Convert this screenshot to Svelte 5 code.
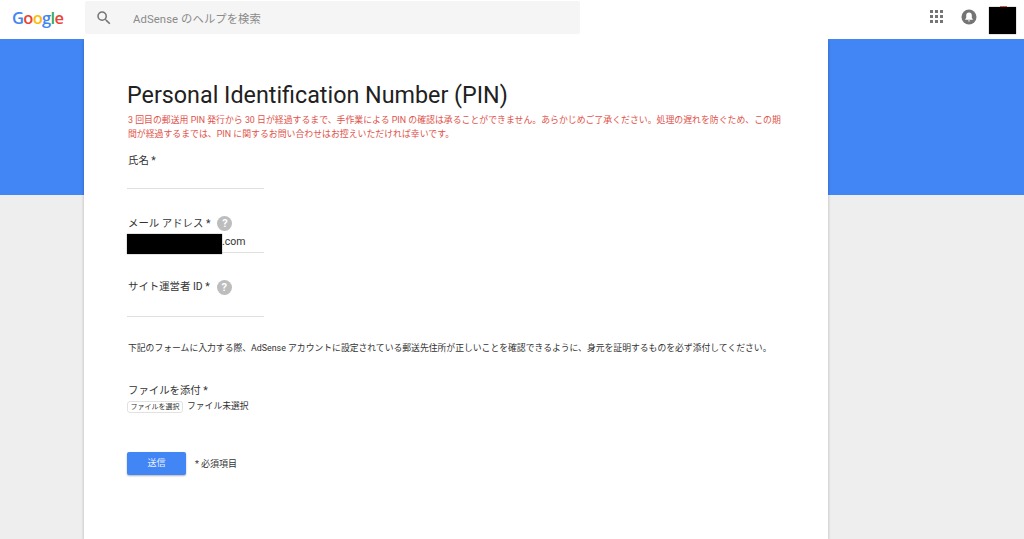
<script>
  const dots = Array.from({ length: 9 });
</script>

<div class="page">
  <header class="top">
    <div class="logo"><span class="b">G</span><span class="r">o</span><span class="y">o</span><span class="b">g</span><span class="g">l</span><span class="r">e</span></div>
    <div class="search">
      <svg class="mag" width="18" height="18" viewBox="0 0 24 24"><path fill="#757575" d="M15.5 14h-.79l-.28-.27A6.47 6.47 0 0 0 16 9.5 6.5 6.5 0 1 0 9.5 16c1.61 0 3.09-.59 4.23-1.57l.27.28v.79l5 4.99L20.49 19l-4.99-5zm-6 0C7.01 14 5 11.99 5 9.5S7.01 5 9.5 5 14 7.01 14 9.5 11.99 14 9.5 14z"/></svg>
      <span class="ph">AdSense のヘルプを検索</span>
    </div>
    <div class="right">
      <div class="grid">{#each dots as _}<i></i>{/each}</div>
      <svg class="bell" width="16" height="16" viewBox="0 0 16 16"><circle cx="8" cy="8" r="7.5" fill="#757575"/><path fill="#fff" d="M8 3.4c-1.8 0-2.8 1.3-2.8 3v2.4L4.2 10.2v.6h7.6v-.6l-1-1.4V6.4c0-1.7-1-3-2.8-3zM6.9 11.4a1.1 1.1 0 0 0 2.2 0z"/></svg>
      <div class="avatar"><span class="tip"></span></div>
    </div>
  </header>

  <div class="stage">
    <div class="band"></div>
    <main class="card">
      <h1>Personal Identification Number (PIN)</h1>
      <p class="warn">3 回目の郵送用 PIN 発行から 30 日が経過するまで、手作業による PIN の確認は承ることができません。あらかじめご了承ください。処理の遅れを防ぐため、この期間が経過するまでは、PIN に関するお問い合わせはお控えいただければ幸いです。</p>

      <div class="field f1">
        <div class="label">氏名 *</div>
        <div class="line"></div>
      </div>

      <div class="field f2">
        <div class="label">メール アドレス * <span class="help">?</span></div>
        <div class="line email"><span class="mask"></span><span class="dom">.com</span></div>
      </div>

      <div class="field f3">
        <div class="label">サイト運営者 ID * <span class="help">?</span></div>
        <div class="line"></div>
      </div>

      <p class="note">下記のフォームに入力する際、AdSense アカウントに設定されている郵送先住所が正しいことを確認できるように、身元を証明するものを必ず添付してください。</p>

      <div class="label attach">ファイルを添付 *</div>
      <div class="file"><span class="fbtn">ファイルを選択</span><span>ファイル未選択</span></div>

      <div class="actions"><span class="send">送信</span><span class="req">* 必須項目</span></div>
    </main>
  </div>
</div>

<style>
  :global(body) { margin: 0; background: #eeeeee; }
  .page { width: 1024px; height: 539px; overflow: hidden; font-family: Roboto, "Noto Sans CJK JP", sans-serif; color: #333; }
  .top { height: 39px; background: #fff; display: flex; position: relative; z-index: 2; }
  .logo { width: 85px; box-sizing: border-box; padding: 7px 0 0 12px; font-family: "Open Sans", "Liberation Sans", sans-serif; font-size: 16.5px; line-height: 22px; letter-spacing: -0.7px; font-weight: 600; }
  .b { color: #4285f4; } .r { color: #ea4335; } .y { color: #fbbc05; } .g { color: #34a853; }
  .search { width: 495px; height: 33px; margin-top: 1px; background: #f5f5f5; border-radius: 2px; display: flex; align-items: center; }
  .mag { margin-left: 10px; }
  .ph { margin-left: 20px; font-size: 11.3px; color: #8a8a8a; letter-spacing: 0.1px; }
  .right { margin-left: auto; display: flex; align-items: flex-start; }
  .grid { margin-top: 10px; display: grid; grid-template-columns: repeat(3, 3px); gap: 2px; }
  .grid i { width: 3px; height: 3px; background: #757575; }
  .bell { margin: 9px 0 0 18px; }
  .avatar { position: relative; width: 27px; height: 27px; margin: 7px 8px 0 12px; background: #000; box-shadow: 0 0 1px #666; }
  .tip { position: absolute; top: -1px; left: 11px; width: 7px; height: 1px; background: #d9534a; }
  .stage { position: relative; height: 500px; }
  .band { height: 156px; background: #4285f4; }
  .card { position: absolute; top: 0; left: 84px; width: 744px; height: 500px; box-sizing: border-box; padding: 41px 43px 0; background: #fff; box-shadow: 0 1px 3px rgba(0,0,0,.25); }
  h1 { margin: 0; font-size: 23.3px; font-weight: 400; line-height: 30px; color: #212121; }
  .warn { margin: 3px 0 0 1px; font-size: 8.9px; line-height: 14px; color: #e0524a; width: 660px; }
  .field { width: 137px; }
  .f1 { margin-top: 12px; } .f2 { margin-top: 27px; } .f3 { margin-top: 26px; }
  .label { font-size: 10.4px; line-height: 16px; color: #333; white-space: nowrap; display: flex; align-items: center; gap: 2px; height: 16px; padding-left: 1px; }
  .line { border-bottom: 1px solid #e0e0e0; height: 19px; }
  .line.email { display: flex; align-items: flex-start; font-size: 10.5px; height: 20px; line-height: 18px; }
  .f3 .line { height: 21px; }
  .mask { width: 95px; height: 20px; margin-top: 2px; background: #000; box-shadow: 0 0 1px #555; }
  .dom { margin-top: 1px; }
  .help { width: 15px; height: 15px; border-radius: 50%; background: #bdbdbd; color: #fff; font-size: 11px; font-weight: 700; line-height: 15px; text-align: center; margin-left: 5px; position: relative; top: -1px; }
  .f3 .help { top: 0; margin-left: 5px; }
  .note { margin: 24px 0 0 1px; font-size: 8.82px; line-height: 14px; color: #333; white-space: nowrap; }
  .attach { margin-top: 27px; height: 17px; }
  .file { display: flex; align-items: flex-start; gap: 4px; font-size: 8.8px; line-height: 14px; height: 14px; }
  .fbtn { width: 56px; height: 12px; margin-top: 2px; box-sizing: border-box; border: 1px solid #e2e2e2; border-radius: 3px; background: #fff; font-size: 7px; line-height: 10px; text-align: center; white-space: nowrap; }
  .actions { display: flex; align-items: center; margin-top: 39px; }
  .send { width: 59px; height: 23px; border-radius: 2px; background: #4285f4; color: #e8f0fe; font-size: 9px; line-height: 23px; text-align: center; box-shadow: 0 1px 2px rgba(0,0,0,.3); }
  .req { margin-left: 9px; font-size: 9px; }
</style>
